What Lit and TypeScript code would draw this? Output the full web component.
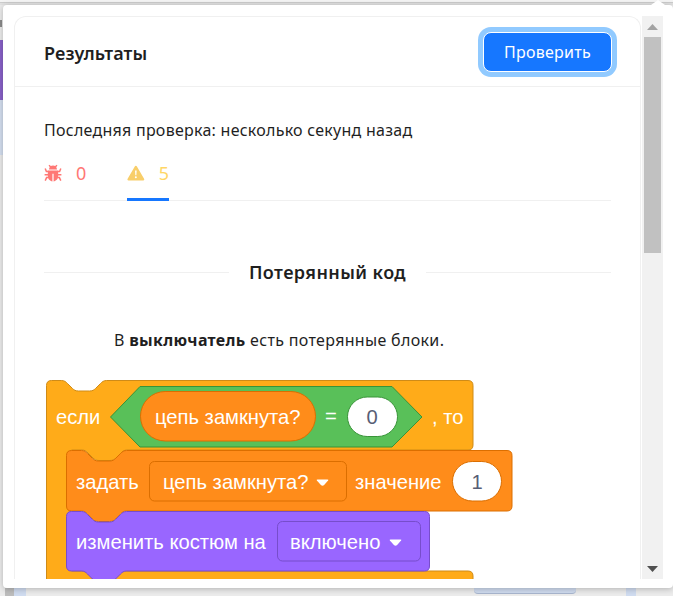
import { LitElement, html, svg, css } from "lit";
import { customElement } from "lit/decorators.js";

// notch and tab of a scratch stack block, drawn left to right from the current point
const NOTCH = "h10 c3 0 4.5 1.5 6 3 l5 5 c1.5 1.5 3 2.5 6 2.5 h11 c3 0 4.5 -1 6 -2.5 l5 -5 c1.5 -1.5 3 -3 6 -3";
const TAB = "c-3 0 -4.5 1.5 -6 3 l-5 5 c-1.5 1.5 -3 2.5 -6 2.5 h-11 c-3 0 -4.5 -1 -6 -2.5 l-5 -5 c-1.5 -1.5 -3 -3 -6 -3 h-10";

const stackPath = (x: number, y: number, r: number, b: number) =>
  `M${x} ${y + 5} q0 -5 5 -5 ${NOTCH} H${r - 5} q5 0 5 5 V${b - 5} q0 5 -5 5 H${x + 60} ${TAB} q-5 0 -5 -5 Z`;

const controlPath = () =>
  `M46.5 385.5 q0 -5 5 -5 ${NOTCH} H468 q5 0 5 5 V445 q0 5 -5 5 H127 ${TAB} q-1 0 -1 1 V570 q0 1 1 1 H468 q5 0 5 5 V640 H46.5 Z`;

const arrow = (x: number, y: number) =>
  svg`<path class="caret" d="M${x} ${y} q-1.3 0 -.6 1 l4 4.6 q1.6 1.4 3.2 0 l4 -4.6 q.7 -1 -.6 -1 Z"></path>`;

@customElement("app-root")
export class AppRoot extends LitElement {
  static override styles = css`
    :host {
      display: block;
      position: relative;
      width: 673px;
      height: 596px;
      overflow: hidden;
      background: #ececec;
      font-family: "Noto Sans", sans-serif;
      color: #1f1f1f;
    }

    .top {
      position: absolute;
      left: 0;
      top: 0;
      width: 100%;
      height: 5px;
      background: linear-gradient(#f4f4f4 0 2px, #cdcdcd 2px 3px, #e2e2e2 3px);
    }

    .side {
      position: absolute;
      left: 0;
      width: 3px;
    }
    .side.purple { top: 40px; height: 60px; background: #8a62c9; }
    .side.blue { top: 100px; height: 55px; background: #d5e0f1; }
    .side.dark { top: 20px; height: 7px; width: 2px; background: #8c8c8c; }

    .under {
      position: absolute;
      top: 588px;
      height: 8px;
      background: #d0dcf0;
    }
    .under.grey { left: 5px; width: 9px; background: #bdbdbd; }
    .under.a { left: 14px; width: 12px; }
    .under.b {
      left: 474px;
      width: 102px;
      height: 6px;
      border-radius: 0 0 4px 4px;
      border-bottom: 1px solid #a9b6cf;
      box-sizing: border-box;
    }
    .under.c { left: 626px; width: 10px; }

    .pointer {
      position: absolute;
      left: 651px;
      top: 0;
      width: 14px;
      height: 5px;
      background: #fff;
      clip-path: polygon(50% 0, 100% 100%, 0 100%);
    }

    .popover {
      position: absolute;
      left: 3px;
      top: 5px;
      right: 0;
      bottom: 8px;
      display: flex;
      gap: 1px;
      padding: 11px 10px 9px 11px;
      background: #fff;
      border-radius: 4px;
      box-shadow: 0 1px 6px rgba(0, 0, 0, 0.25);
    }

    .card {
      flex: 1;
      min-width: 0;
      overflow: hidden;
      box-sizing: border-box;
      border: 1px solid #f0f0f0;
      border-bottom: none;
      border-radius: 12px 12px 0 0;
    }

    .card-head {
      display: flex;
      align-items: center;
      justify-content: space-between;
      height: 69px;
      padding: 0 28px 0 29px;
      border-bottom: 1px solid #f0f0f0;
    }

    .title {
      padding-top: 2px;
      font-size: 18px;
      font-weight: 600;
      letter-spacing: 0.15px;
    }

    button {
      width: 129px;
      height: 40px;
      padding: 0;
      border: 1px solid #fff;
      border-radius: 8px;
      background: #1677ff;
      color: #fff;
      font: inherit;
      font-size: 16px;
      letter-spacing: 0.25px;
      box-shadow: 0 0 0 5px #91caff;
    }

    .card-body {
      padding: 32px 29px 0;
    }

    .checked {
      font-size: 16px;
      letter-spacing: 0.26px;
      line-height: 22px;
      white-space: nowrap;
    }

    .tabs {
      display: flex;
      height: 48px;
      margin-top: 11px;
      border-bottom: 1px solid #f0f0f0;
      box-sizing: content-box;
    }

    .tab {
      display: flex;
      align-items: center;
      gap: 14px;
      height: 48px;
      padding-bottom: 6px;
      box-sizing: border-box;
      font-size: 18px;
    }
    .tab.bugs {
      width: 83px;
      color: #ff7875;
    }
    .tab.warns {
      width: 42px;
      color: #ffd666;
      position: relative;
    }
    .tab.warns::after {
      content: "";
      position: absolute;
      left: 0;
      right: 0;
      bottom: -1px;
      height: 3px;
      background: #1677ff;
    }

    .divider {
      display: flex;
      align-items: center;
      gap: 20px;
      margin-top: 57px;
      font-size: 18px;
      font-weight: 600;
      letter-spacing: 0.4px;
      line-height: 28px;
      white-space: nowrap;
    }
    .divider::before,
    .divider::after {
      content: "";
      flex: 1;
      height: 1px;
      background: #f0f0f0;
    }

    .note {
      margin: 43px 0 0 70px;
      font-size: 16px;
      letter-spacing: 0.33px;
      line-height: 22px;
      white-space: nowrap;
    }

    .blocks {
      display: block;
      margin: 28px 0 0 0;
    }
    .blocks text {
      font-family: "Liberation Sans", Arial, sans-serif;
      font-size: 20.2px;
      fill: #fff;
    }
    .blocks text.val {
      fill: #575e75;
      text-anchor: middle;
    }
    .caret {
      fill: #fff;
    }

    .scrollbar {
      display: flex;
      flex-direction: column;
      align-items: center;
      width: 21px;
      background: #f1f1f1;
    }
    .scroll-arrow {
      height: 21px;
      width: 17px;
      display: flex;
      align-items: center;
      justify-content: center;
    }
    .thumb {
      width: 17px;
      height: 216px;
      background: #c1c1c1;
    }
    .spacer {
      flex: 1;
    }
  `;

  renderBlocks() {
    return svg`
      <path d=${controlPath()} fill="#FFAB19" stroke="#CF8B17"></path>
      <path d="M110.5 417 L140 386.5 H392 L422 417 L392 447 H140 Z" fill="#59C059" stroke="#389438"></path>
      <rect x="140.5" y="391.5" width="175" height="49.5" rx="24.7" fill="#FF8C1A" stroke="#DB6E00"></rect>
      <rect x="347.5" y="397" width="50" height="39.5" rx="19.7" fill="#fff" stroke="#389438"></rect>
      <text x="56" y="424">если</text>
      <text x="155" y="424">цепь замкнута?</text>
      <text x="325" y="423">=</text>
      <text class="val" x="372" y="424">0</text>
      <text x="432" y="424">, то</text>

      <path d=${stackPath(66.5, 450.5, 512, 511)} fill="#FF8C1A" stroke="#DB6E00"></path>
      <rect x="149.5" y="461.5" width="197" height="39.5" rx="5" fill="#FF8C1A" stroke="#DB6E00"></rect>
      <rect x="452.5" y="461.5" width="49" height="39.5" rx="19.7" fill="#fff" stroke="#DB6E00"></rect>
      <text x="76" y="489">задать</text>
      <text x="163" y="489">цепь замкнута?</text>
      ${arrow(317.5, 479.5)}
      <text x="355" y="489">значение</text>
      <text class="val" x="477" y="489">1</text>

      <path d=${stackPath(66.5, 511.5, 429.5, 571)} fill="#9966FF" stroke="#774DCB"></path>
      <rect x="277.5" y="521.5" width="143" height="39.5" rx="5" fill="#9966FF" stroke="#774DCB"></rect>
      <text x="76" y="549">изменить костюм на</text>
      <text x="290" y="549">включено</text>
      ${arrow(390.5, 539.5)}
    `;
  }

  override render() {
    return html`
      <div class="top"></div>
      <div class="side dark"></div>
      <div class="side purple"></div>
      <div class="side blue"></div>
      <div class="under grey"></div>
      <div class="under a"></div>
      <div class="under b"></div>
      <div class="under c"></div>
      <div class="popover">
        <div class="card">
          <div class="card-head">
            <span class="title">Результаты</span>
            <button>Проверить</button>
          </div>
          <div class="card-body">
            <div class="checked">Последняя проверка: несколько секунд назад</div>
            <div class="tabs">
              <div class="tab bugs">
                <svg width="18" height="18" viewBox="0 0 18 18" fill="#ff7875">
                  <path d="M5 5.4 C5.2 3 6.8 1.6 9 1.6 S12.8 3 13 5.4 Z"></path>
                  <path d="M3.8 6.4 H14.2 V11.8 C14.2 15 12 17.2 9.6 17.4 V9.8 H8.4 V17.4 C6 17.2 3.8 15 3.8 11.8 Z"></path>
                  <path d="M5 1.2 L6.8 3 M13 1.2 L11.2 3 M1.2 4.4 L2.4 7.6 H4.4 M16.8 4.4 L15.6 7.6 H13.6 M.6 10.8 H4.4 M17.4 10.8 H13.6 M1.2 16.6 L2.6 13.6 H4.8 M16.8 16.6 L15.4 13.6 H13.2" fill="none" stroke="#ff7875" stroke-width="1.5"></path>
                </svg>
                <span>0</span>
              </div>
              <div class="tab warns">
                <svg width="18" height="16" viewBox="0 0 18 16">
                  <path d="M9 .6 Q9.7 .6 10.1 1.3 L17.5 14 Q18 15.4 16.6 15.6 H1.4 Q0 15.4 .5 14 L7.9 1.3 Q8.3 .6 9 .6 Z" fill="#f8ce6a"></path>
                  <path d="M8.2 5.4 H9.8 L9.5 10.4 H8.5 Z" fill="#fff"></path>
                  <circle cx="9" cy="12.3" r="1" fill="#fff"></circle>
                </svg>
                <span>5</span>
              </div>
            </div>
            <div class="divider">Потерянный код</div>
            <p class="note">В <b>выключатель</b> есть потерянные блоки.</p>
            <svg class="blocks" width="480" height="210" viewBox="44 379 480 210">
              ${this.renderBlocks()}
            </svg>
          </div>
        </div>
        <div class="scrollbar">
          <div class="scroll-arrow">
            <svg width="11" height="6" viewBox="0 0 11 6"><path d="M5.5 0 L11 6 H0 Z" fill="#a3a3a3"></path></svg>
          </div>
          <div class="thumb"></div>
          <div class="spacer"></div>
          <div class="scroll-arrow">
            <svg width="11" height="6" viewBox="0 0 11 6"><path d="M0 0 H11 L5.5 6 Z" fill="#505050"></path></svg>
          </div>
        </div>
      </div>
      <div class="pointer"></div>
    `;
  }
}
